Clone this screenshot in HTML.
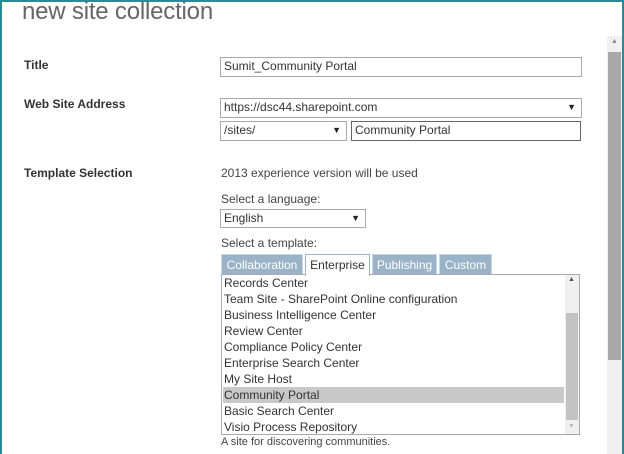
<!DOCTYPE html>
<html><head><style>
*{box-sizing:border-box;margin:0;padding:0}
body{width:624px;height:454px;overflow:hidden;background:#fff;font-family:"Liberation Sans",sans-serif;font-size:12px;color:#444;position:relative}
.frame{position:absolute;left:0;top:0;width:624px;height:454px;border:2px solid #2a8a9a;border-bottom:none}
.a{position:absolute;white-space:nowrap}
.h{left:22px;top:-2px;font-size:24px;color:#666;font-family:"Liberation Sans",sans-serif;font-weight:300;letter-spacing:-0.2px}
.lbl{font-weight:bold;color:#333;font-size:12px;left:24px}
.box{position:absolute;border:1px solid #aaa;background:#fff;font-size:12px;color:#333;padding-left:3px;line-height:17px}
.arr{position:absolute;right:5px;top:0;font-size:9px;color:#222}
.tab{position:absolute;top:254px;height:21px;background:#9bb3c7;color:#fff;font-size:12px;text-align:center;line-height:20px;border:1px solid #c8d6e2}
.list{position:absolute;left:221px;top:274px;width:359px;height:161px;border:1px solid #aaa;background:#fff}
.it{position:absolute;left:1px;width:341px;height:16px;line-height:16px;padding-left:1px;font-size:12px;color:#333}
</style></head><body>
<div class="frame"></div>
<div class="a h">new site collection</div>
<div class="a lbl" style="top:58px">Title</div>
<div class="a lbl" style="top:97px">Web Site Address</div>
<div class="a lbl" style="top:166px">Template Selection</div>
<div class="box" style="left:220px;top:57px;width:362px;height:20px">Sumit_Community Portal</div>
<div class="box" style="left:220px;top:98px;width:362px;height:20px">https://dsc44.sharepoint.com<span class="arr">▼</span></div>
<div class="box" style="left:220px;top:121px;width:127px;height:20px">/sites/<span class="arr">▼</span></div>
<div class="box" style="left:351px;top:121px;width:230px;height:20px;border-color:#666">Community Portal</div>
<div class="a" style="left:221px;top:166px;font-size:12px">2013 experience version will be used</div>
<div class="a" style="left:221px;top:192px;font-size:12px">Select a language:</div>
<div class="box" style="left:220px;top:209px;width:146px;height:19px;line-height:16px">English<span class="arr">▼</span></div>
<div class="a" style="left:221px;top:236px;font-size:12px">Select a template:</div>
<div class="tab" style="left:221px;width:82px">Collaboration</div>
<div class="tab" style="left:305px;width:65px;background:#fff;color:#333;border-color:#9bb3c7;border-bottom:none;height:22px;z-index:2">Enterprise</div>
<div class="tab" style="left:372px;width:65px">Publishing</div>
<div class="tab" style="left:439px;width:53px">Custom</div>
<div class="list">
<div class="it" style="top:0">Records Center</div>
<div class="it" style="top:16px">Team Site - SharePoint Online configuration</div>
<div class="it" style="top:32px">Business Intelligence Center</div>
<div class="it" style="top:48px">Review Center</div>
<div class="it" style="top:64px">Compliance Policy Center</div>
<div class="it" style="top:80px">Enterprise Search Center</div>
<div class="it" style="top:96px">My Site Host</div>
<div class="it" style="top:112px;background:#c8c8c8">Community Portal</div>
<div class="it" style="top:128px">Basic Search Center</div>
<div class="it" style="top:144px">Visio Process Repository</div>
<div style="position:absolute;left:343px;top:0;width:14px;height:159px;background:#f0f0f0"></div>
<div style="position:absolute;left:344px;top:38px;width:12px;height:107px;background:#c2c2c2"></div>
<div style="position:absolute;left:346px;top:1px;font-size:7px;color:#555">▲</div>
<div style="position:absolute;left:346px;top:148px;font-size:7px;color:#bbb">▼</div>
</div>
<div class="a" style="left:221px;top:436px;font-size:11px">A site for discovering communities.</div>
<div style="position:absolute;left:607px;top:36px;width:15px;height:418px;background:#f0f0f0"></div>
<div style="position:absolute;left:608px;top:52px;width:13px;height:308px;background:#a8a8a8"></div>
<div style="position:absolute;left:611px;top:38px;font-size:7px;color:#888">▲</div>
</body></html>
